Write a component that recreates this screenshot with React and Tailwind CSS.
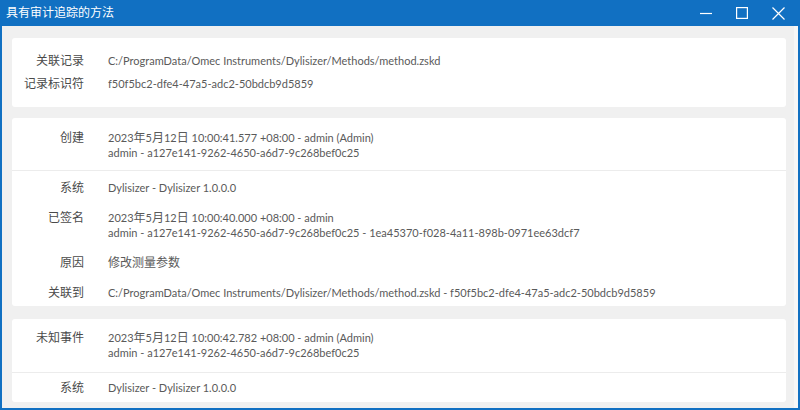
const FONT = { fontFamily: 'Lato, "Noto Sans CJK SC", sans-serif' };

// CJK runs are set a little larger than the Latin runs, as in the original UI font
function Mixed({ text }) {
  const parts = text.split(/([\u3000-\u9fff]+)/).filter(Boolean);
  return parts.map((p, i) =>
    /[\u3000-\u9fff]/.test(p) ? (
      <span key={i} className="text-[12px]">{p}</span>
    ) : (
      <span key={i}>{p}</span>
    )
  );
}

function Row({ label, lines, className = '' }) {
  return (
    <div className={`flex text-[11px] leading-[15px] ${className}`}>
      <div className="w-[72px] shrink-0 text-right text-[12px] text-[#4a4a4a]">{label}</div>
      <div className="ml-6 text-[#5a5a5a]">
        {lines.map((l) => (
          <div key={l} className="whitespace-nowrap">
            <Mixed text={l} />
          </div>
        ))}
      </div>
    </div>
  );
}

function TitleBar() {
  return (
    <div className="h-[26px] bg-[#1170c2] flex items-center shrink-0">
      <span className="pl-[6px] text-white text-[12px]">具有审计追踪的方法</span>
      <div className="ml-auto flex items-center h-full">
        <div className="w-9 h-full flex items-center justify-center">
          <svg width="12" height="12" viewBox="0 0 12 12"><path d="M0 6.5h12" stroke="#fff" strokeWidth="1.2" /></svg>
        </div>
        <div className="w-9 h-full flex items-center justify-center">
          <svg width="12" height="12" viewBox="0 0 12 12"><rect x="0.6" y="0.6" width="10.8" height="10.8" fill="none" stroke="#fff" strokeWidth="1.2" /></svg>
        </div>
        <div className="w-9 h-full flex items-center justify-center mr-[4px]">
          <svg width="13" height="13" viewBox="0 0 13 13"><path d="M0.5 0.5l12 12M12.5 0.5l-12 12" stroke="#fff" strokeWidth="1.2" /></svg>
        </div>
      </div>
    </div>
  );
}

export default function App() {
  return (
    <div className="w-[800px] h-[410px] flex flex-col bg-[#1170c2] overflow-hidden" style={FONT}>
      <TitleBar />
      <div className="flex-1 flex mx-[2px] mb-[2px] bg-[#f0f0f0] min-h-0">
        <div className="flex-1 pl-[10px] pr-[8px] pt-[12px] flex flex-col">
          <div className="bg-white rounded-[3px] pt-[15px] pb-[16px] flex flex-col gap-[8px]">
            <Row label="关联记录" lines={['C:/ProgramData/Omec Instruments/Dylisizer/Methods/method.zskd']} />
            <Row label="记录标识符" lines={['f50f5bc2-dfe4-47a5-adc2-50bdcb9d5859']} />
          </div>

          <div className="bg-white rounded-[3px] mt-[11px]">
            <div className="pt-[12px] pb-[10px] border-b border-[#ececec]">
              <Row label="创建" lines={['2023年5月12日 10:00:41.577 +08:00 - admin (Admin)', 'admin - a127e141-9262-4650-a6d7-9c268bef0c25']} />
            </div>
            <div className="pt-[1px]">
              <Row className="py-[7.5px]" label="系统" lines={['Dylisizer - Dylisizer 1.0.0.0']} />
              <Row className="py-[7.5px]" label="已签名" lines={['2023年5月12日 10:00:40.000 +08:00 - admin', 'admin - a127e141-9262-4650-a6d7-9c268bef0c25 - 1ea45370-f028-4a11-898b-0971ee63dcf7']} />
              <Row className="py-[7.5px]" label="原因" lines={['修改测量参数']} />
              <Row className="pt-[7.5px] pb-[6px]" label="关联到" lines={['C:/ProgramData/Omec Instruments/Dylisizer/Methods/method.zskd - f50f5bc2-dfe4-47a5-adc2-50bdcb9d5859']} />
            </div>
          </div>

          <div className="bg-white rounded-[3px] mt-[13px]">
            <div className="pt-[11px] pb-[12px] border-b border-[#ececec]">
              <Row label="未知事件" lines={['2023年5月12日 10:00:42.782 +08:00 - admin (Admin)', 'admin - a127e141-9262-4650-a6d7-9c268bef0c25']} />
            </div>
            <Row className="py-[7px]" label="系统" lines={['Dylisizer - Dylisizer 1.0.0.0']} />
          </div>
        </div>
        <div className="w-[4px] bg-[#f7f7f7]" />
      </div>
    </div>
  );
}
